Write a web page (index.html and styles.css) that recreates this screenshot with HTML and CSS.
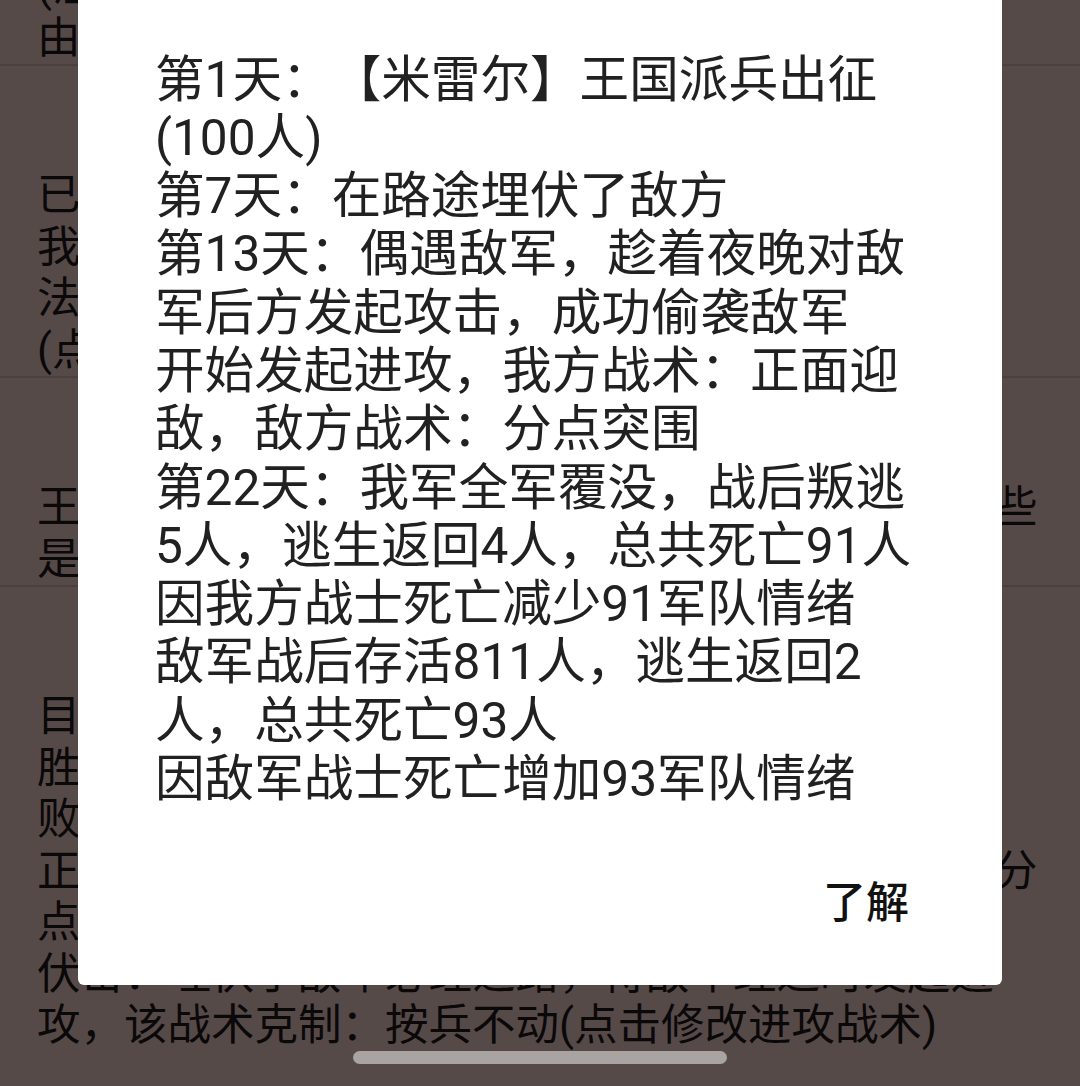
FILE: index.html
```html
<!DOCTYPE html>
<html lang="zh-CN">
  <head>
    <meta charset="utf-8" />
    <meta name="viewport" content="width=device-width, initial-scale=1.0" />
    <link rel="stylesheet" href="styles.css">
  </head>
  <body>
    <!-- 任务列表（已向下滚动） -->
    <main class="feed">
      <div class="entry">
        <p class="entry-text">
          国王的命令已经下达，各地领主开始集结<br>
          (注意：出征部队需要补充粮草)<br>
          由骑士团长统领全军出征
        </p>
      </div>
      <div class="entry">
        <p class="entry-text">
          已派遣的部队正在行军途中<br>
          我方将领：米雷尔王国骑士团<br>
          法术支援：无<br>
          (点击查看战斗详情)
        </p>
      </div>
      <div class="entry">
        <p class="entry-text">
          王国边境的村庄经常受到敌军骚扰，请派兵驻守这些<br>
          是否派兵(点击选择出征部队)
        </p>
      </div>
      <div class="entry">
        <p class="entry-text">
          目标：击败入侵的敌军<br>
          胜利条件：消灭全部敌军<br>
          败北条件：我方全军覆没<br>
          正面迎敌：主力部队正面迎击敌军，该战术克制：分<br>
          点突围(点击修改防守战术)<br>
          伏击：埋伏于敌军必经之路，待敌军经过时发起进<br>
          攻，该战术克制：按兵不动(点击修改进攻战术)
        </p>
      </div>
    </main>

    <div class="scrim"></div>

    <!-- 战报弹窗 -->
    <div class="dialog">
      <p class="dialog-body">
        第1天：【米雷尔】王国派兵出征(100人)<br>
        第7天：在路途埋伏了敌方<br>
        第13天：偶遇敌军，趁着夜晚对敌军后方发起攻击，成功偷袭敌军<br>
        开始发起进攻，我方战术：正面迎敌，敌方战术：分点突围<br>
        第22天：我军全军覆没，战后叛逃5人，逃生返回4人，总共死亡91人<br>
        因我方战士死亡减少91军队情绪<br>
        敌军战后存活811人，逃生返回2人，总共死亡93人<br>
        因敌军战士死亡增加93军队情绪
      </p>
      <div class="dialog-actions">
        <button class="dialog-btn" type="button">了解</button>
      </div>
    </div>

    <div class="nav-handle"></div>
  </body>
</html>
```

FILE: styles.css
```css
/* Simple Reset CSS */
* {
  margin: 0;
  padding: 0;
  box-sizing: border-box;
}

html,
body {
  height: 100%;
}

/* 拉丁字符和数字用 Roboto，汉字回退到思源黑体 */
body {
  font-family: Roboto, 'Noto Sans CJK SC', sans-serif;
  color: #1b1616;
  background-color: #d7b9b4;
  overflow: hidden;
  /* 全角标点不挤压 */
  text-spacing-trim: space-all;
}

/* 列表已滚动，第一项只露出底部 */
.feed {
  margin-top: -194.5px;
}

.entry {
  padding: 104px 37px 0;
  border-bottom: 2px solid #bca09b;
}

.entry:last-child {
  border-bottom: 0;
}

.entry-text {
  font-size: 43.5px;
  line-height: 51.5px;
}

/* 弹窗遮罩 */
.scrim {
  position: fixed;
  top: 0;
  right: 0;
  bottom: 0;
  left: 0;
  background-color: rgba(0, 0, 0, 0.6);
}

.dialog {
  position: fixed;
  top: -20px;
  bottom: 101px;
  left: 78px;
  width: 924px;
  display: flex;
  flex-direction: column;
  background-color: #fff;
  border-radius: 6px;
}

.dialog-body {
  padding: 70.5px 77px 0;
  font-size: 49.6px;
  line-height: 58.3px;
  color: #212121;
}

.dialog-actions {
  margin-top: auto;
  display: flex;
  justify-content: flex-end;
  padding: 0 93px 52px;
}

.dialog-btn {
  font: 500 43px/60px Roboto, 'Noto Sans CJK SC', sans-serif;
  color: #111;
  background: none;
  border: 0;
  text-spacing-trim: space-all;
}

/* 系统手势条 */
.nav-handle {
  position: fixed;
  left: 353px;
  bottom: 22px;
  width: 374px;
  height: 13px;
  border-radius: 7px;
  background-color: #a9a3a1;
}
```
